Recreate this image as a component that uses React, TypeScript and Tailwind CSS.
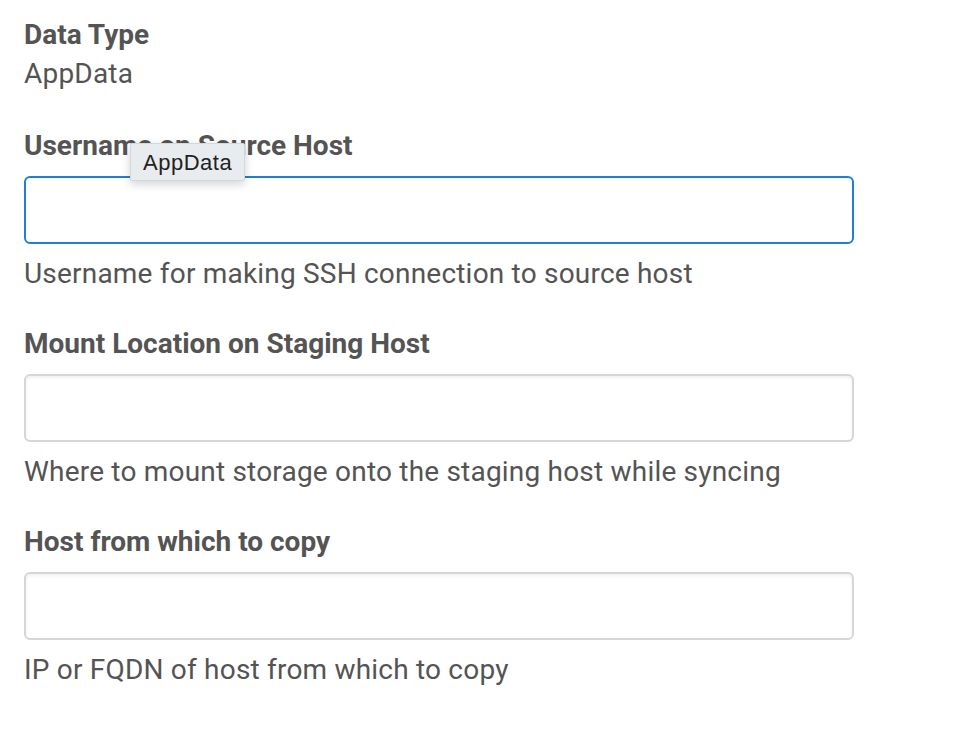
import React from "react";

function Field({ label, help, focused, children }: { label: string; help: string; focused?: boolean; children?: React.ReactNode }) {
  return (
    <div className="flex flex-col">
      <div className="relative">
        <div className="text-[28px] leading-[36px] font-bold">{label}</div>
        {children}
      </div>
      <input
        className={
          focused
            ? "mt-[12px] h-[68px] w-[830px] rounded-[6px] border-2 border-[#1e80d4] bg-white outline-none"
            : "mt-[12px] h-[68px] w-[830px] rounded-[6px] border-2 border-[#d6d6d6] bg-white outline-none shadow-[inset_0_2px_3px_rgba(0,0,0,0.06)]"
        }
      />
      <div className="mt-[12px] text-[28px] leading-[36px] tracking-[0.2px]">{help}</div>
    </div>
  );
}

export default function App() {
  return (
    <div
      className="w-[954px] h-[734px] bg-white text-[#545454] px-[24px] pt-[17px]"
      style={{ fontFamily: "Roboto, 'Liberation Sans', sans-serif" }}
    >
      <div className="text-[28px] leading-[36px] font-bold">Data Type</div>
      <div className="mt-[3px] text-[28px] leading-[36px] tracking-[0.2px]">AppData</div>
      <div className="mt-[36px] flex flex-col gap-[34px]">
        <Field label="Username on Source Host" help="Username for making SSH connection to source host" focused>
          <div
            className="absolute left-[106px] top-[15px] h-[38px] px-[12px] flex items-center bg-[#e8ecef] border border-[#d4d8db] rounded-[2px] text-[#222] text-[22px] tracking-[0.5px] shadow-[0_3px_10px_rgba(0,0,0,0.18)]"
            style={{ fontFamily: "'Liberation Sans', Arial, sans-serif" }}
          >
            AppData
          </div>
        </Field>
        <Field label="Mount Location on Staging Host" help="Where to mount storage onto the staging host while syncing" />
        <Field label="Host from which to copy" help="IP or FQDN of host from which to copy" />
      </div>
    </div>
  );
}
